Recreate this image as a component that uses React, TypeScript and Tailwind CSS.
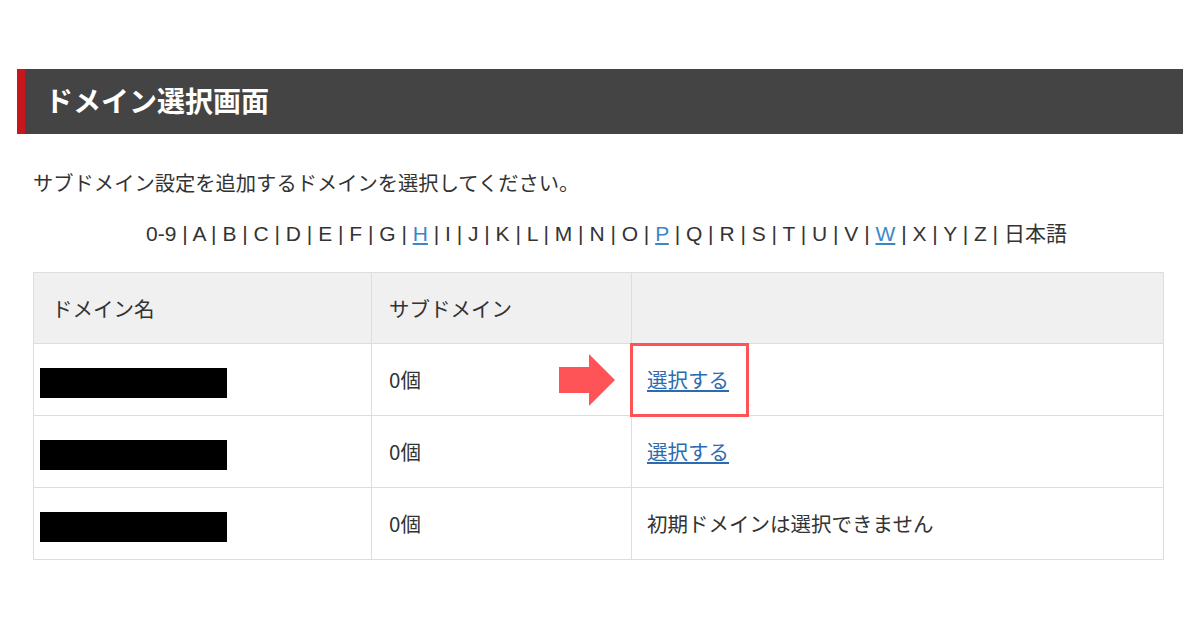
import React from 'react';

const letters = ['0-9', 'A', 'B', 'C', 'D', 'E', 'F', 'G', 'H', 'I', 'J', 'K', 'L', 'M', 'N', 'O', 'P', 'Q', 'R', 'S', 'T', 'U', 'V', 'W', 'X', 'Y', 'Z', '日本語'];
const linked = ['H', 'P', 'W'];

const rows = [
  { count: '0個', action: 'link', highlight: true },
  { count: '0個', action: 'link', highlight: false },
  { count: '0個', action: 'none', highlight: false },
];

function Arrow() {
  return (
    <svg width="56" height="52" viewBox="0 0 56 52" className="absolute left-[187px] top-[10px]">
      <path d="M0 13 H30 V0 L56 26 L30 52 V39 H0 Z" fill="#ff5457" />
    </svg>
  );
}

export default function App() {
  return (
    <div
      className="w-[1200px] h-[630px] bg-white pt-[69px] text-[#333]"
      style={{ fontFamily: '"Noto Sans CJK JP", "Noto Sans", sans-serif' }}
    >
      {/* Title bar */}
      <div className="mx-[17px] h-[65px] bg-[#444] border-l-8 border-[#c8161e] flex items-center pl-5">
        <h1 className="text-white text-[28px] font-bold leading-none -mt-[4px]">ドメイン選択画面</h1>
      </div>

      <div className="px-[33px]">
        <p className="mt-[34px] text-[20.3px] leading-7">サブドメイン設定を追加するドメインを選択してください。</p>

        {/* Index */}
        <div
          className="mt-[22px] pl-[13px] text-center text-[21px] leading-7"
          style={{ fontFamily: '"Liberation Sans", "Noto Sans CJK JP", sans-serif' }}
        >
          {letters.map((l, i) => (
            <span key={l}>
              {linked.includes(l) ? (
                <a href="#" className="text-[#3a87c8] underline">{l}</a>
              ) : (
                <span style={l === '日本語' ? { fontFamily: '"Noto Sans CJK JP", sans-serif' } : undefined}>{l}</span>
              )}
              {i < letters.length - 1 && <span> | </span>}
            </span>
          ))}
        </div>

        {/* Table */}
        <table className="mt-[24px] w-[1131px] table-fixed border-collapse text-[20.5px]">
          <colgroup>
            <col className="w-[338px]" />
            <col className="w-[260px]" />
            <col />
          </colgroup>
          <thead>
            <tr className="h-[71px] bg-[#f0f0f0]">
              <th className="border border-[#dddddd] text-left font-normal pl-[18px]">ドメイン名</th>
              <th className="border border-[#dddddd] text-left font-normal pl-[17px]">サブドメイン</th>
              <th className="border border-[#dddddd]"></th>
            </tr>
          </thead>
          <tbody>
            {rows.map((r, i) => (
              <tr key={i} className="h-[72px]">
                <td className="border border-[#dddddd] pl-[6px]">
                  <div className="w-[187px] h-[30px] bg-black mt-[6px]" />
                </td>
                <td className="border border-[#dddddd] pl-[17px] relative">
                  {r.count}
                  {r.highlight && <Arrow />}
                </td>
                <td className="border border-[#dddddd] pl-[15px] relative">
                  {r.action === 'link' ? (
                    <a href="#" className="text-[#2d6bb0] underline">選択する</a>
                  ) : (
                    <span>初期ドメインは選択できません</span>
                  )}
                  {r.highlight && (
                    <div className="absolute left-[-2px] top-[-1px] w-[119px] h-[74px] border-[3px] border-[#ff5457]" />
                  )}
                </td>
              </tr>
            ))}
          </tbody>
        </table>
      </div>
    </div>
  );
}
